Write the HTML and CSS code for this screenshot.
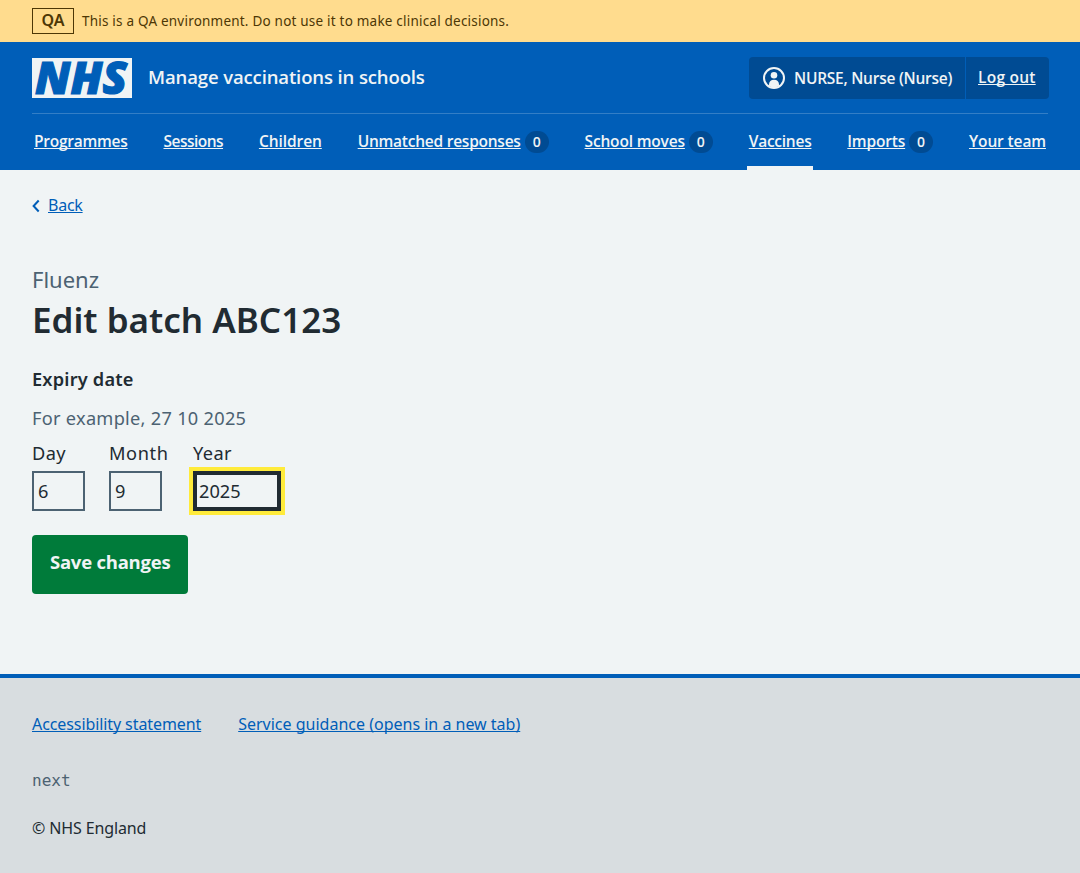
FILE: index.html
```html
<!DOCTYPE html>
<html lang="en">
<head>
<meta charset="utf-8">
<title>Edit batch ABC123</title>
<link rel="stylesheet" href="styles.css">
</head>
<body>
<div class="environment"><strong class="environment-tag">QA</strong><span class="environment-text">This is a QA environment. Do not use it to make clinical decisions.</span></div>
<header class="header">
  <div class="header-top">
    <svg class="logo" viewBox="0 0 100 40" width="100" height="40" role="img" aria-label="NHS"><rect width="100" height="40" fill="#f0f4f5"/><text class="logo-text" x="3" y="36" textLength="92" lengthAdjust="spacingAndGlyphs">NHS</text></svg>
    <span class="service-name">Manage vaccinations in schools</span>
    <div class="account">
      <div class="account-user">
        <svg width="22" height="22" viewBox="0 0 22 22"><circle cx="11" cy="11" r="10" fill="none" stroke="#f0f4f5" stroke-width="2"/><circle cx="11" cy="8.3" r="3.3" fill="#f0f4f5"/><path d="M6 18.8v-1.3c0-3 2-4.7 5-4.7s5 1.7 5 4.7v1.3c-3 2-7 2-10 0z" fill="#f0f4f5"/></svg>
        <span class="user-name">NURSE, Nurse (Nurse)</span>
      </div>
      <div class="account-out"><a class="logout" href="#">Log out</a></div>
    </div>
  </div>
  <nav class="nav">
    <div class="nav-item"><a class="programmes" href="#">Programmes</a></div>
    <div class="nav-item"><a class="sessions" href="#">Sessions</a></div>
    <div class="nav-item"><a class="children" href="#">Children</a></div>
    <div class="nav-item"><a class="responses" href="#">Unmatched responses</a><span class="count">0</span></div>
    <div class="nav-item"><a class="moves" href="#">School moves</a><span class="count">0</span></div>
    <div class="nav-item current"><a class="vaccines" href="#">Vaccines</a></div>
    <div class="nav-item"><a class="imports" href="#">Imports</a><span class="count">0</span></div>
    <div class="nav-item"><a class="team" href="#">Your team</a></div>
  </nav>
</header>
<main class="main">
  <div class="back"><svg width="8" height="14" viewBox="0 0 8 14"><path d="M6.7 1.5L1.6 7l5.1 5.5" fill="none" stroke="#005eb8" stroke-width="2"/></svg><a class="back-link" href="#">Back</a></div>
  <div class="caption">Fluenz</div>
  <h1 class="title">Edit batch ABC123</h1>
  <div class="legend">Expiry date</div>
  <div class="hint">For example, 27 10 2025</div>
  <div class="date">
    <label class="field day">Day<input class="input" value="6"></label>
    <label class="field month">Month<input class="input" value="9"></label>
    <label class="field">Year<input class="input year focused" value="2025"></label>
  </div>
  <button class="save">Save changes</button>
</main>
<footer class="footer">
  <div class="links"><a class="statement" href="#">Accessibility statement</a><a href="#">Service guidance (opens in a new tab)</a></div>
  <div class="version">next</div>
  <div class="copyright">© NHS England</div>
</footer>
</body>
</html>
```
FILE: styles.css
```css
* { box-sizing: border-box; }
body { margin: 0; min-height: 873px; display: flex; flex-direction: column; background: #f0f4f5; color: #212b32; font-family: "Noto Sans", "Open Sans", sans-serif; }
a { color: #005eb8; text-decoration: underline; text-decoration-thickness: 1px; text-underline-offset: 1px; text-decoration-skip-ink: none; }
span, a { white-space: nowrap; }

.environment { height: 42px; padding-left: 32px; display: flex; align-items: center; gap: 8px; background: #ffdc8e; color: #4d3705; font-size: 13.5px; }
.environment-tag { width: 42px; height: 26px; border: 1px solid #4d3705; font-size: 16px; line-height: 23px; text-align: center; font-weight: 600; }
.environment-text { letter-spacing: 0.21px; }

.header { height: 128px; padding: 0 32px; background: #005eb8; color: #f0f4f5; font-family: "Open Sans", sans-serif; font-weight: 600; }
.header a { color: #f0f4f5; }
.header-top { height: 72px; padding-top: 15px; display: flex; align-items: flex-start; border-bottom: 1px solid #337ec6; }
.logo { margin-top: 1px; overflow: visible; }
.logo-text { font: italic 800 45px "Open Sans", sans-serif; fill: #005eb8; stroke: #005eb8; stroke-width: 1.2px; }
.service-name { margin-left: 16px; font-size: 18.5px; line-height: 39px; letter-spacing: -0.12px; }
.account { margin-left: auto; margin-right: -1px; width: 300px; height: 42px; display: flex; background: #004b93; border-radius: 4px; font-size: 15.5px; line-height: 41px; }
.account-user { width: 217px; padding-left: 14px; display: flex; align-items: center; gap: 9px; border-right: 1px solid #005eb8; }
.user-name { letter-spacing: -0.25px; }
.account-out { padding-left: 12px; }
.logout { letter-spacing: 0.25px; }
.nav { height: 56px; display: flex; justify-content: space-between; }
.nav-item { height: 56px; padding: 0 2px 2px; display: flex; align-items: center; gap: 4px; font-size: 15.5px; }
.current { border-bottom: 4px solid #f0f4f5; padding-top: 2px; padding-bottom: 0; }
.programmes { letter-spacing: -0.24px; }
.vaccines { letter-spacing: -0.25px; }
.sessions { letter-spacing: -0.52px; }
.children { letter-spacing: -0.07px; }
.team { letter-spacing: -0.12px; }
.responses { letter-spacing: -0.24px; }
.moves, .imports { letter-spacing: -0.17px; }
.count { width: 24px; height: 22px; margin-top: 2px; border-radius: 11px; background: #004b93; font-size: 14px; line-height: 22px; text-align: center; }

.main { height: 504px; padding: 0 32px; }
.back { margin-top: 24px; height: 24px; display: flex; align-items: center; gap: 8px; font-size: 16px; }
.back-link { margin-top: -2px; letter-spacing: -0.25px; }
.caption { margin-top: 44px; height: 35px; line-height: 35px; font-size: 22px; color: #4c6272; }
.title { margin: 0; height: 47px; line-height: 45px; font-size: 35px; font-weight: 650; letter-spacing: 0; }
.legend { margin-top: 21px; height: 28px; line-height: 28px; font-size: 18.2px; font-weight: 600; letter-spacing: 0.2px; }
.hint { margin-top: 11px; height: 28px; line-height: 28px; font-size: 18.2px; letter-spacing: 0.28px; color: #4c6272; }
.date { margin-top: 7px; display: flex; gap: 24px; }
.field { display: flex; flex-direction: column; font-size: 18.2px; line-height: 28px; letter-spacing: 0.4px; }
.day { width: 53px; }
.month { width: 60px; letter-spacing: 0.6px; }
.input { margin-top: 4px; width: 53px; height: 40px; padding: 0 4px; border: 2px solid #4c6272; border-radius: 0; background: transparent; color: #212b32; font: 18.2px "Noto Sans", sans-serif; }
.year { width: 88px; }
.focused { border-color: #212b32; box-shadow: inset 0 0 0 2px #212b32; outline: 4px solid #ffeb3b; }
.save { margin-top: 24px; width: 156.4px; height: 59px; padding: 0 0 6px; border: 0; border-radius: 4px; background: #007b3a; color: #f0f4f5; font: 700 18.5px "Open Sans", sans-serif; letter-spacing: -0.22px; }

.footer { height: 199px; padding: 34px 32px 0; border-top: 4px solid #005eb8; background: #d8dde0; font-size: 16px; line-height: 24px; }
.links { display: flex; gap: 37px; }
.statement { letter-spacing: -0.09px; }
.version { margin-top: 33px; color: #4c6272; font-family: "DejaVu Sans Mono", monospace; }
.copyright { margin-top: 23px; letter-spacing: -0.12px; }
```
